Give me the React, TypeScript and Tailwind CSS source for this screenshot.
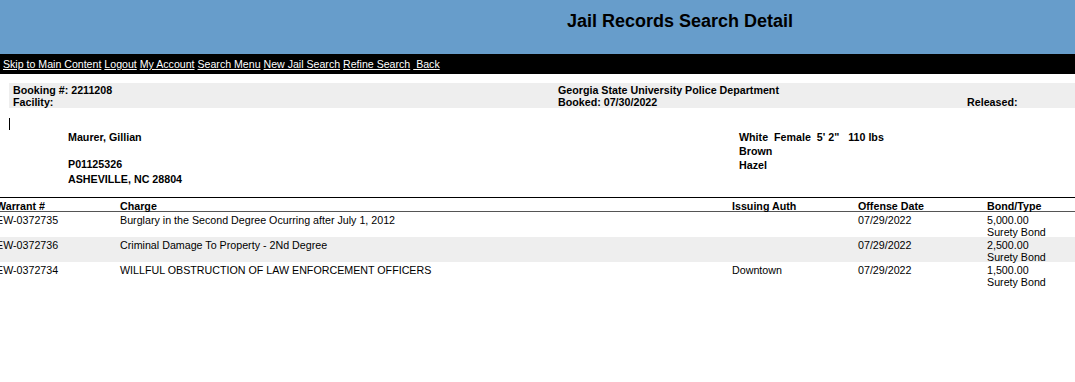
const navLinks = [
  "Skip to Main Content",
  "Logout",
  "My Account",
  "Search Menu",
  "New Jail Search",
  "Refine Search",
  " Back",
];

const charges = [
  {
    warrant: "EW-0372735",
    charge: "Burglary in the Second Degree Ocurring after July 1, 2012",
    auth: "",
    date: "07/29/2022",
    bond: "5,000.00",
    type: "Surety Bond",
  },
  {
    warrant: "EW-0372736",
    charge: "Criminal Damage To Property - 2Nd Degree",
    auth: "",
    date: "07/29/2022",
    bond: "2,500.00",
    type: "Surety Bond",
  },
  {
    warrant: "EW-0372734",
    charge: "WILLFUL OBSTRUCTION OF LAW ENFORCEMENT OFFICERS",
    auth: "Downtown",
    date: "07/29/2022",
    bond: "1,500.00",
    type: "Surety Bond",
  },
];

const cols = "grid grid-cols-[124px_612px_126px_129px_1fr]";

export default function App() {
  return (
    <div className="w-[1075px] h-[382px] overflow-hidden bg-white text-black font-['Liberation_Sans',Arial,sans-serif] text-[10.7px] leading-[12px]">
      <header className="h-[54px] bg-[#679dcb] pl-[567px] pt-[11px]">
        <h1 className="text-[18px] leading-[21px] font-bold">Jail Records Search Detail</h1>
      </header>

      <nav className="h-[20px] bg-black flex items-center pl-[3px] gap-[3px] text-white text-[10.6px]">
        {navLinks.map((l) => (
          <a key={l} href="#" className="underline whitespace-pre leading-[12px]">
            {l}
          </a>
        ))}
      </nav>

      <section className="mt-[9px] ml-[9px] h-[25px] bg-[#eeeeee] pt-[1px] pl-[4px] grid grid-cols-[545px_409px_1fr] font-bold">
        <div>Booking #: 2211208</div>
        <div>Georgia State University Police Department</div>
        <div />
        <div>Facility:</div>
        <div>Booked: 07/30/2022</div>
        <div>Released:</div>
      </section>

      <div className="mt-[10px] ml-[9px] h-[12px] w-px bg-black" />

      <section className="h-[67px] flex font-bold">
        <div className="pl-[68px] w-[739px]">
          <div className="leading-[14px]">Maurer, Gillian</div>
          <div className="mt-[13px] leading-[15px]">P01125326</div>
          <div className="leading-[15px]">ASHEVILLE, NC 28804</div>
        </div>
        <div className="leading-[14px]">
          <div className="whitespace-pre">White  Female  5' 2"   110 lbs</div>
          <div>Brown</div>
          <div>Hazel</div>
        </div>
      </section>

      <div className="border-t border-black">
        <div className={`${cols} ml-[-4px] font-bold pt-[2px] h-[14px] border-b border-[#555555]`}>
          <div>Warrant #</div>
          <div>Charge</div>
          <div>Issuing Auth</div>
          <div>Offense Date</div>
          <div>Bond/Type</div>
        </div>
        {charges.map((c, i) => (
          <div
            key={c.warrant}
            className={`${cols} ml-[-4px] h-[25px] pt-[2px] ${i === 1 ? "bg-[#eeeeee]" : ""}`}
          >
            <div>{c.warrant}</div>
            <div>{c.charge}</div>
            <div>{c.auth}</div>
            <div>{c.date}</div>
            <div>
              <div>{c.bond}</div>
              <div>{c.type}</div>
            </div>
          </div>
        ))}
      </div>
    </div>
  );
}
